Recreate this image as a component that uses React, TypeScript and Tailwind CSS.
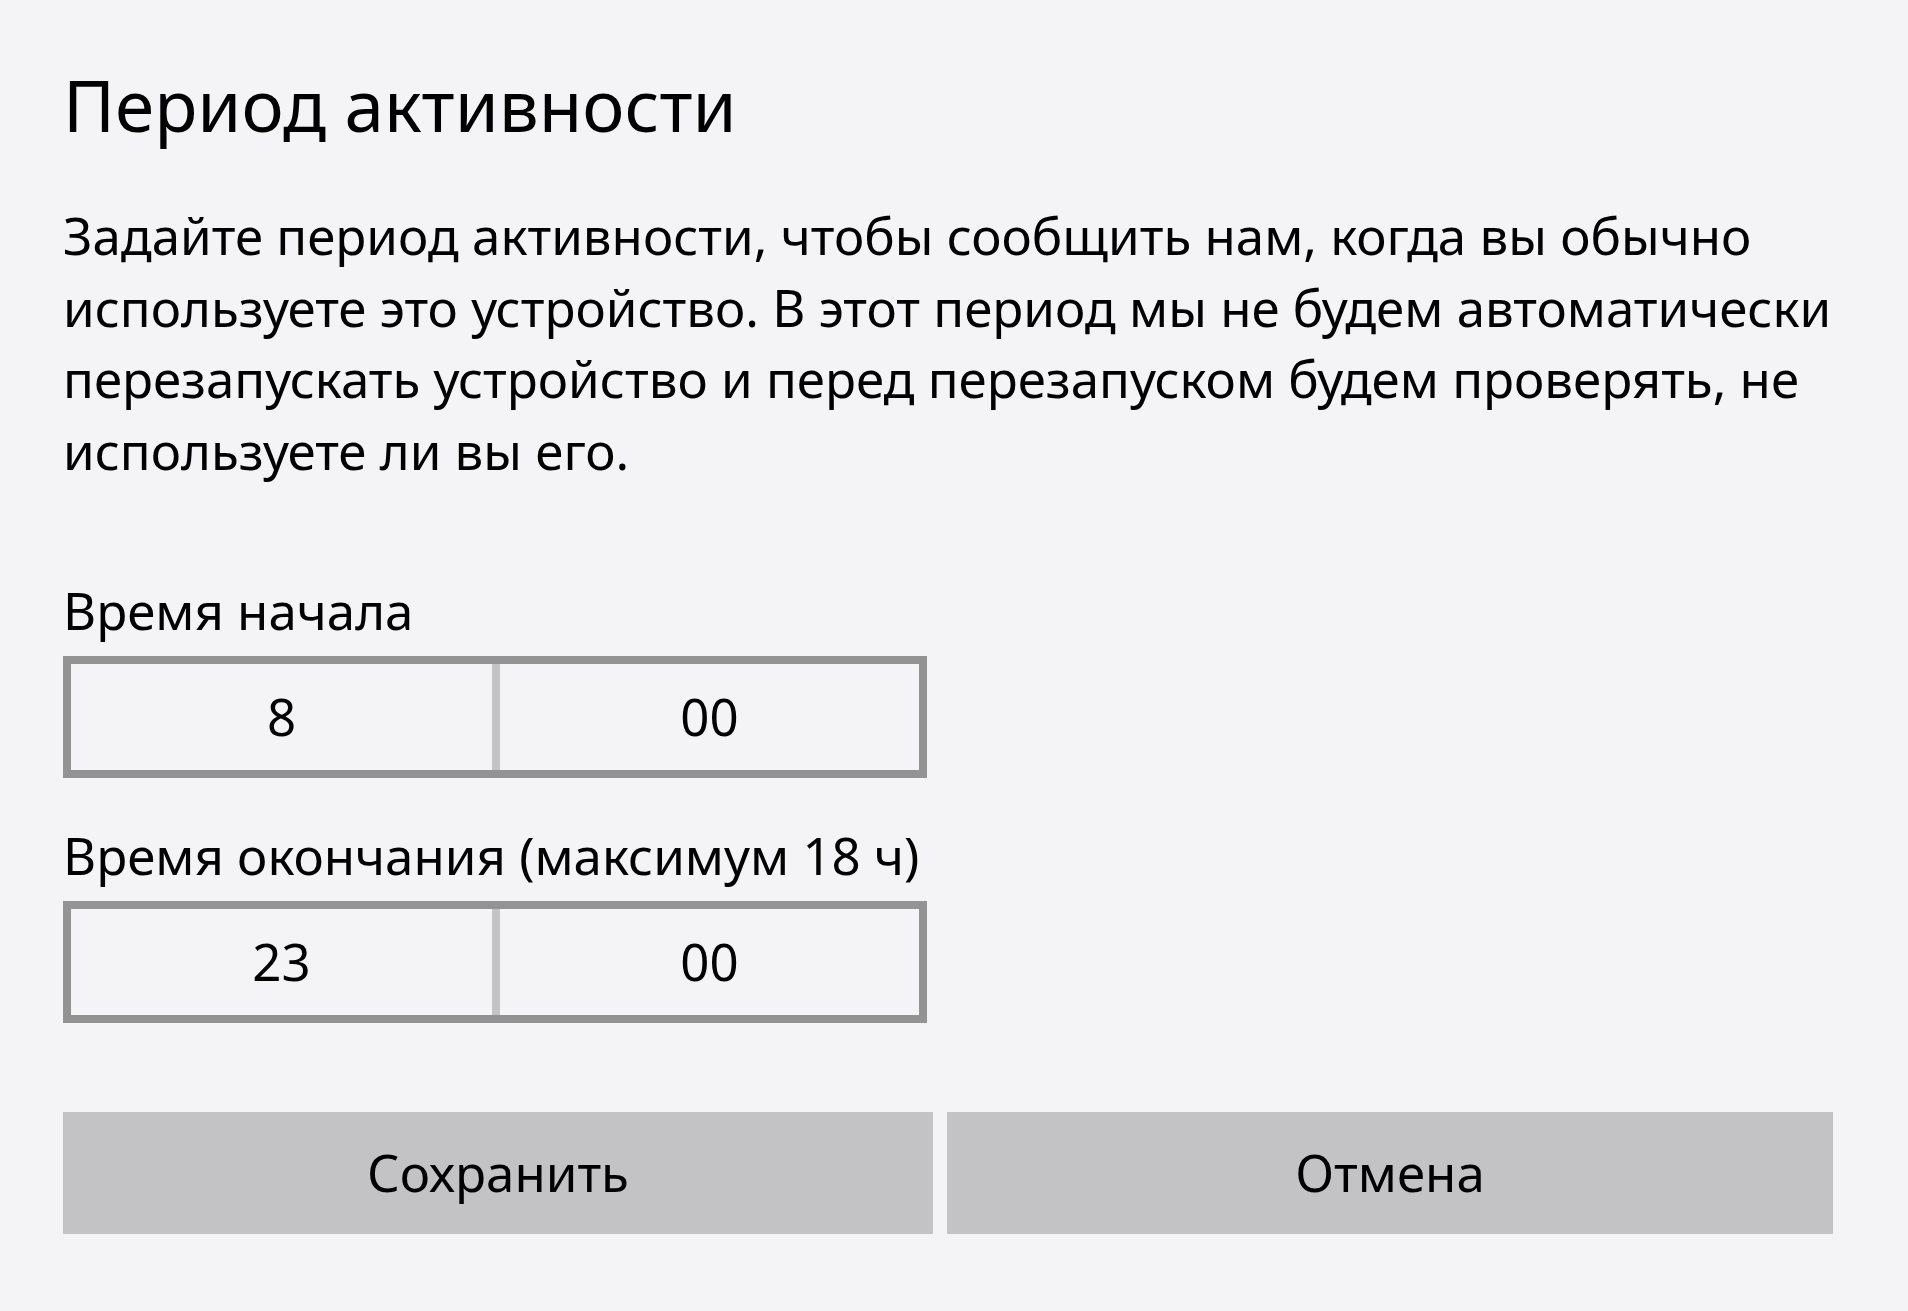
import React from 'react';

const TimeBox: React.FC<{ hour: string; minute: string }> = ({ hour, minute }) => (
    <div className="mt-[9.5px] flex h-[122px] w-[864px] border-[8px] border-[#939393]">
        <div className="flex w-[421px] items-center justify-center">{hour}</div>
        <div className="flex flex-1 items-center justify-center border-l-[8px] border-[#c3c3c3]">{minute}</div>
    </div>
);

export default function App() {
    return (
        <div className="min-h-screen bg-[#f4f4f6] pl-[63px] pt-[55px] text-[#000] font-['Noto_Sans',sans-serif]">
            <h1 className="text-[71px] leading-[100px]">Период активности</h1>

            <p className="mt-[45px] whitespace-nowrap text-[51px] leading-[71.5px]">
                Задайте период активности, чтобы сообщить нам, когда вы обычно
                <br />
                используете это устройство. В этот период мы не будем автоматически
                <br />
                перезапускать устройство и перед перезапуском будем проверять, не
                <br />
                используете ли вы его.
            </p>

            <div className="text-[51px] leading-[71.5px]">
                <div className="mt-[89px]">Время начала</div>
                <TimeBox hour="8" minute="00" />

                <div className="mt-[42px]">Время окончания (максимум 18 ч)</div>
                <TimeBox hour="23" minute="00" />

                <div className="mt-[89px] grid h-[122px] grid-cols-[870px_886px] gap-[14px]">
                    <button className="flex items-center justify-center bg-[#c3c3c5]">Сохранить</button>
                    <button className="flex items-center justify-center bg-[#c3c3c5]">Отмена</button>
                </div>
            </div>
        </div>
    );
}
